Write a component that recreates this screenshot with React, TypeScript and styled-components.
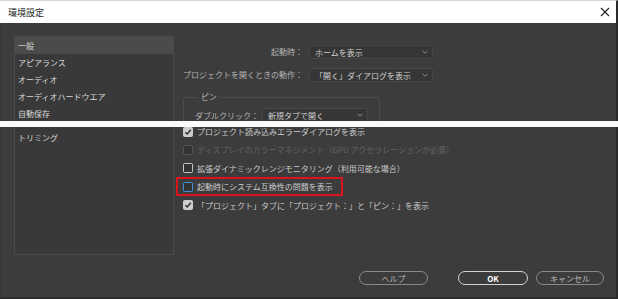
import styled, { createGlobalStyle } from "styled-components";

const GlobalStyle = createGlobalStyle`
  html, body {
    margin: 0;
    padding: 0;
    background: #2b2b2b;
  }
  body {
    width: 618px;
    height: 299px;
    overflow: hidden;
    font-family: "Noto Sans CJK JP", "Noto Sans", sans-serif;
  }
`;

const Window = styled.div`
  width: 618px;
  height: 299px;
  display: flex;
  flex-direction: column;
`;

const TitleBar = styled.div`
  height: 23px;
  box-sizing: border-box;
  background: #fff;
  border-right: 2px solid #2b2b2b;
  border-top: 1px solid #d6d6d6;
  display: flex;
  align-items: center;
  justify-content: space-between;
  padding: 0 6px 0 8px;
  font-size: 9px;
  color: #1c1c1c;
`;

const Pane = styled.div<{ $h: number }>`
  height: ${({ $h }) => $h}px;
  box-sizing: border-box;
  background: #3c3c3c;
  border-right: 2px solid #2b2b2b;
  border-left: 1px solid #363636;
  overflow: hidden;
  display: flex;
  flex-direction: column;
`;

const Band = styled.div`
  height: 6px;
  background: #fafafa;
`;

const Row = styled.div<{ $h?: number }>`
  display: flex;
  height: ${({ $h }) => ($h ? `${$h}px` : "100%")};
`;

const Sidebar = styled.div<{ $cut: "top" | "bottom" }>`
  margin-left: 13px;
  margin-top: ${({ $cut }) => ($cut === "bottom" ? "13px" : "0")};
  width: 160px;
  box-sizing: border-box;
  background: #393939;
  border: 1px solid #4a4a4a;
  ${({ $cut }) => ($cut === "bottom" ? "border-bottom: none;" : "border-top: none;")}
  padding-top: ${({ $cut }) => ($cut === "top" ? "2px" : "0")};
  flex-shrink: 0;
`;

const NavItem = styled.div<{ $active?: boolean }>`
  height: 17px;
  line-height: 17px;
  padding-left: 3px;
  font-size: 8px;
  color: #d8d8d8;
  background: ${({ $active }) => ($active ? "#4b4b4b" : "transparent")};
`;

const Content = styled.div<{ $top: number }>`
  padding-left: 9px;
  margin-top: ${({ $top }) => $top}px;
  display: flex;
  flex-direction: column;
`;

const FormGrid = styled.div`
  display: grid;
  grid-template-columns: 120px 124px;
  column-gap: 6px;
  row-gap: 9px;
`;

const Label = styled.div`
  font-size: 8px;
  line-height: 14px;
  color: #b4b4b4;
  text-align: right;
  white-space: nowrap;
`;

const Select = styled.div<{ $w?: number }>`
  width: ${({ $w }) => ($w ? `${$w}px` : "auto")};
  height: 14px;
  box-sizing: border-box;
  display: flex;
  align-items: center;
  justify-content: space-between;
  padding: 0 4px 0 5px;
  background: #363636;
  border: 1px solid #474747;
  border-radius: 2px;
  font-size: 8px;
  color: #d0d0d0;
  white-space: nowrap;
`;

const Group = styled.fieldset`
  margin: 10px 0 0 0;
  width: 197px;
  min-height: 60px;
  box-sizing: border-box;
  border: 1px solid #4c4c4c;
  border-radius: 2px;
  padding: 6px 0 0 11px;
`;

const Legend = styled.legend`
  font-size: 8px;
  line-height: 10px;
  color: #b4b4b4;
  padding: 0 3px;
  margin-left: 3px;
`;

const GroupRow = styled.div`
  display: flex;
  align-items: center;
  gap: 3px;
  font-size: 8px;
  color: #b4b4b4;
`;

const CheckRow = styled.div<{ $disabled?: boolean; $highlight?: boolean }>`
  height: 18.4px;
  box-sizing: border-box;
  display: flex;
  align-items: center;
  gap: 4px;
  font-size: 8px;
  white-space: nowrap;
  color: ${({ $disabled }) => ($disabled ? "#626262" : "#cacaca")};
  ${({ $highlight }) =>
    $highlight &&
    `
    width: fit-content;
    margin-left: -7px;
    padding: 0 10px 0 7px;
    box-shadow: inset 0 0 0 2px #d9141c;
  `}
`;

const Box = styled.span<{ $state: "on" | "off" | "disabled" | "focus" }>`
  width: 10px;
  height: 10px;
  box-sizing: border-box;
  border-radius: 1.5px;
  display: inline-flex;
  align-items: center;
  justify-content: center;
  flex-shrink: 0;
  background: ${({ $state }) => ($state === "on" ? "#cdcdcd" : "#333")};
  border: 1px solid
    ${({ $state }) =>
      $state === "on"
        ? "#cdcdcd"
        : $state === "disabled"
        ? "#555"
        : $state === "focus"
        ? "#3f93dc"
        : "#c4c4c4"};
`;

const Footer = styled.div`
  display: flex;
  justify-content: flex-end;
  align-items: center;
  gap: 8px;
  margin-top: 16px;
  padding-right: 12px;
`;

const Button = styled.div<{ $w: number; $primary?: boolean; $after?: number }>`
  width: ${({ $w }) => $w}px;
  height: 14px;
  box-sizing: border-box;
  display: flex;
  align-items: center;
  justify-content: center;
  border-radius: 8px;
  border: 1px solid ${({ $primary }) => ($primary ? "#d4d4d4" : "#8a8a8a")};
  color: ${({ $primary }) => ($primary ? "#fff" : "#b8b8b8")};
  font-size: 8px;
  font-weight: ${({ $primary }) => ($primary ? 700 : 400)};
  margin-right: ${({ $after }) => ($after ? `${$after}px` : "0")};
`;

const Chevron = () => (
  <svg width="6" height="4" viewBox="0 0 6 4">
    <polyline points="0.5,0.8 3,3.2 5.5,0.8" fill="none" stroke="#9a9a9a" strokeWidth="0.9" />
  </svg>
);

const Tick = () => (
  <svg width="8" height="8" viewBox="0 0 8 8">
    <polyline points="1.3,4.2 3.2,6 6.8,1.8" fill="none" stroke="#2e2e2e" strokeWidth="1.4" />
  </svg>
);

const CloseIcon = () => (
  <svg width="10" height="10" viewBox="0 0 10 10">
    <path d="M1 1 L9 9 M9 1 L1 9" stroke="#222" strokeWidth="1.1" />
  </svg>
);

const checks: { label: string; state: "on" | "off" | "disabled" | "focus" }[] = [
  { label: "プロジェクト読み込みエラーダイアログを表示", state: "on" },
  { label: "ディスプレイのカラーマネジメント（GPU アクセラレーションが必要）", state: "disabled" },
  { label: "拡張ダイナミックレンジモニタリング（利用可能な場合）", state: "off" },
  { label: "起動時にシステム互換性の問題を表示", state: "focus" },
  { label: "「プロジェクト」タブに「プロジェクト：」と「ピン：」を表示", state: "on" },
];

const App = () => {
  return (
    <>
      <GlobalStyle />
      <Window>
        <TitleBar>
          <span>環境設定</span>
          <CloseIcon />
        </TitleBar>

        <Pane $h={98}>
          <Row>
            <Sidebar $cut="bottom">
              <NavItem $active>一般</NavItem>
              <NavItem>アピアランス</NavItem>
              <NavItem>オーディオ</NavItem>
              <NavItem>オーディオハードウエア</NavItem>
              <NavItem>自動保存</NavItem>
            </Sidebar>
            <Content $top={22}>
              <FormGrid>
                <Label>起動時：</Label>
                <Select>
                  ホームを表示
                  <Chevron />
                </Select>
                <Label>プロジェクトを開くときの動作：</Label>
                <Select>
                  「開く」ダイアログを表示
                  <Chevron />
                </Select>
              </FormGrid>
              <Group>
                <Legend>ピン</Legend>
                <GroupRow>
                  ダブルクリック：
                  <Select $w={106}>
                    新規タブで開く
                    <Chevron />
                  </Select>
                </GroupRow>
              </Group>
            </Content>
          </Row>
        </Pane>

        <Band />

        <Pane $h={172} style={{ borderBottom: "2px solid #2b2b2b" }}>
          <Row $h={128}>
            <Sidebar $cut="top">
              <NavItem>トリミング</NavItem>
            </Sidebar>
            <Content $top={-4.7}>
              {checks.map((c) => (
                <CheckRow
                  key={c.label}
                  $disabled={c.state === "disabled"}
                  $highlight={c.state === "focus"}
                >
                  <Box $state={c.state}>{c.state === "on" && <Tick />}</Box>
                  {c.label}
                </CheckRow>
              ))}
            </Content>
          </Row>
          <Footer>
            <Button $w={69} $after={22}>ヘルプ</Button>
            <Button $w={70} $primary>OK</Button>
            <Button $w={68}>キャンセル</Button>
          </Footer>
        </Pane>
      </Window>
    </>
  );
};

export default App;
